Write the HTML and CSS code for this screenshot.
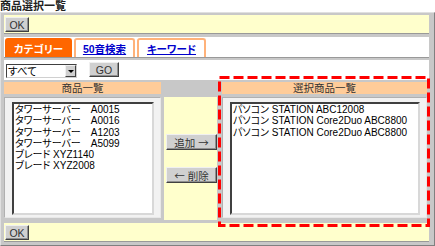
FILE: index.html
```html
<!DOCTYPE html>
<html lang="ja">
<head>
    <meta charset="UTF-8">
    <title>商品選択一覧</title>
    <link rel="stylesheet" href="styles.css">
</head>
<body>

    <h1 class="page-title">商品選択一覧</h1>

    <div class="frame">
        <div class="bar">
            <button class="btn btn-ok">OK</button>
        </div>

        <div class="tabs">
            <span class="tab tab-active">カテゴリー</span>
            <a class="tab tab-kana" href="#">50音検索</a>
            <a class="tab tab-word" href="#">キーワード</a>
        </div>

        <div class="filter">
            <div class="select">
                <span class="select-value">すべて</span>
                <span class="select-arrow"></span>
            </div>
            <button class="btn btn-go">GO</button>
        </div>

        <div class="panels">
            <div class="panel panel-left">
                <div class="panel-head">商品一覧</div>
                <div class="panel-body">
                    <div class="listbox">
                        <div class="item">タワーサーバー　A0015</div>
                        <div class="item">タワーサーバー　A0016</div>
                        <div class="item">タワーサーバー　A1203</div>
                        <div class="item">タワーサーバー　A5099</div>
                        <div class="item">ブレード XYZ1140</div>
                        <div class="item">ブレード XYZ2008</div>
                    </div>
                </div>
            </div>

            <div class="panel panel-mid">
                <div class="panel-head panel-head-blank"></div>
                <div class="mid-body">
                    <button class="btn btn-move">追加 <span class="arrow">→</span></button>
                    <button class="btn btn-move"><span class="arrow">←</span> 削除</button>
                </div>
            </div>

            <div class="panel panel-right">
                <div class="panel-head">選択商品一覧</div>
                <div class="panel-body">
                    <div class="listbox">
                        <div class="item">パソコン STATION ABC12008</div>
                        <div class="item">パソコン STATION Core2Duo ABC8800</div>
                        <div class="item">パソコン STATION Core2Duo ABC8800</div>
                    </div>
                </div>
            </div>
        </div>

        <div class="bar">
            <button class="btn btn-ok">OK</button>
        </div>
    </div>

    <!-- annotation over the selected list -->
    <svg class="highlight" width="212" height="151" viewBox="0 0 212 151">
        <rect x="1.5" y="1.5" width="209" height="148" fill="none" stroke="#ff0000" stroke-width="3" stroke-dasharray="10 4"/>
    </svg>

</body>
</html>
```

FILE: styles.css
```css
* {
    box-sizing: border-box;
}

body {
    margin: 0;
    font-family: "Liberation Sans", "Noto Sans CJK JP", sans-serif;
    font-size: 10.5px;
    font-feature-settings: "palt";
    color: #000;
    background-color: #fff;
}

.page-title {
    margin: 0;
    height: 12px;
    font-size: 11px;
    line-height: 12px;
    font-weight: bold;
    color: #222;
}

.frame {
    display: flex;
    flex-direction: column;
    background-color: #c8c8c8;
    border: 1px solid;
    border-color: #e0e0e0 #808080 #808080 #e0e0e0;
    padding: 2px 5px 3px 3px;
}

.bar {
    height: 19px;
    padding: 2px 0 0 1px;
    background-color: #ffffcc;
    border-bottom: 1px solid #999;
}

.bar:first-child {
    margin-bottom: 3px;
}

.btn {
    display: flex;
    align-items: center;
    justify-content: center;
    gap: 3px;
    padding: 0;
    font-family: inherit;
    font-size: 10.5px;
    color: #333;
    background-color: #d0d0d0;
    border: 1px solid;
    border-color: #f0f0f0 #404040 #404040 #f0f0f0;
    box-shadow: inset -1px -1px #909090;
}

.btn .arrow {
    font-family: "Noto Sans CJK JP", sans-serif;
}

.btn-ok {
    width: 24px;
    height: 15px;
}

.tabs {
    display: flex;
    gap: 2px;
    height: 21px;
    padding: 1px 0 0 1px;
    margin-bottom: 2px;
    background-color: #fff;
    border-bottom: 1px solid #999;
}

.tab {
    display: flex;
    align-items: center;
    justify-content: center;
    height: 19px;
    font-weight: bold;
    color: #0000cc;
    text-decoration: underline;
    border: 2px solid #ffb27a;
    border-bottom: none;
    border-radius: 3px 3px 0 0;
}

.tab-active {
    width: 67px;
    color: #fff;
    text-decoration: none;
    background-color: #ff6600;
    border-color: #ff6600;
}

.tab-kana {
    width: 61px;
}

.tab-word {
    width: 69px;
}

.filter {
    display: flex;
    align-items: flex-start;
    height: 20px;
    background-color: #fff;
}

.select {
    display: flex;
    width: 71px;
    height: 14px;
    margin: 4px 0 0 2px;
    background-color: #fff;
    border: 1px solid;
    border-color: #404040 #d0d0d0 #d0d0d0 #404040;
}

.select-value {
    flex: 1;
    padding-left: 1px;
    line-height: 12px;
}

.select-arrow {
    position: relative;
    width: 11px;
    background-color: #d0d0d0;
    border: 1px solid;
    border-color: #f0f0f0 #404040 #404040 #f0f0f0;
}

.select-arrow::after {
    content: "";
    position: absolute;
    left: 2px;
    top: 4px;
    border-left: 3px solid transparent;
    border-right: 3px solid transparent;
    border-top: 3px solid #000;
}

.btn-go {
    width: 30px;
    height: 15px;
    margin: 2px 0 0 12px;
}

.panels {
    display: flex;
    gap: 3px;
    height: 140px;
    padding: 2px 2px 2px 0;
    margin-bottom: 3px;
}

.panel {
    display: flex;
    flex-direction: column;
    gap: 3px;
}

.panel-left {
    width: 157px;
}

.panel-mid {
    width: 53px;
    margin-right: 2px;
    margin-bottom: -2px;
}

.panel-right {
    width: 205px;
}

.panel-head {
    height: 12px;
    line-height: 12px;
    text-align: center;
    color: #333;
    background-color: #ffcc99;
}

.panel-head-blank {
    background-color: transparent;
}

.panel-body {
    flex: 1;
    display: flex;
    padding: 4px 6px 2px 7px;
    background-color: #f2f2f2;
    border: 1px solid;
    border-color: #b0b0b0 #e8e8e8 #e8e8e8 #b0b0b0;
}

.listbox {
    flex: 1;
    padding: 0 1px;
    background-color: #fff;
    border: 2px solid;
    border-color: #404040 #d8d8d8 #d8d8d8 #404040;
}

.item {
    height: 11.3px;
    font-size: 10px;
    line-height: 11.3px;
    white-space: nowrap;
}

.mid-body {
    flex: 1;
    display: flex;
    flex-direction: column;
    align-items: flex-end;
    gap: 17px;
    padding-top: 37px;
    background-color: #ffffcc;
}

.btn-move {
    width: 51px;
    height: 16px;
}

.highlight {
    position: absolute;
    left: 218px;
    top: 76px;
}
```
